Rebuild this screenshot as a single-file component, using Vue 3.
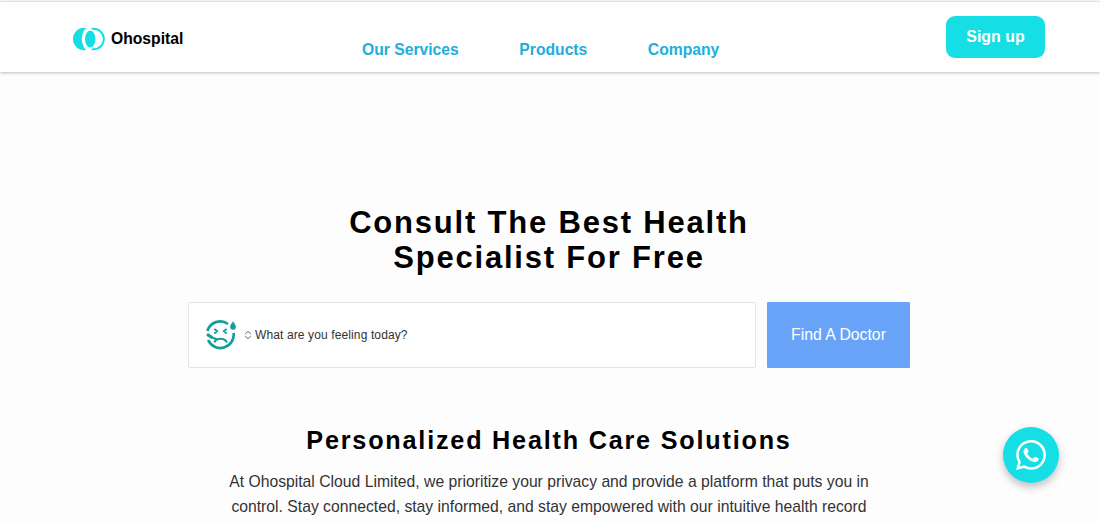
<template>
    <div class="page">
        <header class="navbar">
            <a class="brand" href="#">
                <svg class="brand-logo" viewBox="0 0 32 24">
                    <circle cx="11.3" cy="12" r="11.3" fill="#15dfe4" />
                    <circle cx="20.6" cy="12" r="11.8" fill="#fefefe" />
                    <circle cx="20.6" cy="12" r="10.2" fill="none" stroke="#15dfe4" stroke-width="1.9" />
                    <ellipse cx="15.6" cy="12" rx="6.6" ry="11.6" fill="#fefefe" />
                    <ellipse cx="17.2" cy="12" rx="5.2" ry="8.6" fill="#15dfe4" />
                </svg>
                <span>Ohospital</span>
            </a>
            <nav class="links">
                <a v-for="link in links" :key="link" href="#">{{ link }}</a>
            </nav>
            <button class="btn-signup">Sign up</button>
        </header>

        <main class="hero">
            <h1>Consult The Best Health<br />Specialist For Free</h1>

            <form class="search" @submit.prevent>
                <label class="search-box">
                    <svg class="face" viewBox="0 0 32 32" fill="none" stroke="#179d98" stroke-width="2.7">
                        <path d="M2.4 12A13.3 13.3 0 0 1 23 5M28.6 14A13.3 13.3 0 0 1 3.2 21" />
                        <path d="M9.4 10l2.6 2.1-2.6 2.3M21.6 10l-2.6 2.1 2.6 2.3" stroke-width="2" />
                        <path d="M2 15.4l5.4 3.2" stroke-width="3" />
                        <path d="M6.6 18.4l5 1.6M9.2 23.4c2.8-4.8 10-4.8 12.8 0" stroke-width="2.1" />
                        <path d="M28 2.2c1.1 2 2.9 3.7 2.9 5.6a2.9 2.9 0 0 1-5.8 0c0-1.9 1.8-3.6 2.9-5.6z" fill="#179d98" stroke="none" />
                    </svg>
                    <svg class="sort" viewBox="0 0 8 10" fill="none" stroke="#555" stroke-width="0.9">
                        <path d="M1.2 4L4 1.3 6.8 4M1.2 6L4 8.7 6.8 6" />
                    </svg>
                    <span>What are you feeling today?</span>
                </label>
                <button class="btn-find">Find A Doctor</button>
            </form>
        </main>

        <section class="solutions">
            <h2>Personalized Health Care Solutions</h2>
            <p>
                At Ohospital Cloud Limited, we prioritize your privacy and provide a platform that puts you in<br />
                control. Stay connected, stay informed, and stay empowered with our intuitive health record
            </p>
        </section>

        <a class="chat" href="#" aria-label="WhatsApp">
            <svg viewBox="0 0 24 24" fill="#fff">
                <path d="M17.472 14.382c-.297-.149-1.758-.867-2.03-.967-.273-.099-.471-.148-.67.15-.197.297-.767.966-.94 1.164-.173.199-.347.223-.644.075-.297-.15-1.255-.463-2.39-1.475-.883-.788-1.48-1.761-1.653-2.059-.173-.297-.018-.458.13-.606.134-.133.298-.347.446-.52.149-.174.198-.298.298-.497.099-.198.05-.371-.025-.52-.075-.149-.669-1.612-.916-2.207-.242-.579-.487-.5-.669-.51-.173-.008-.371-.01-.57-.01-.198 0-.52.074-.792.372-.272.297-1.04 1.016-1.04 2.479 0 1.462 1.065 2.875 1.213 3.074.149.198 2.096 3.2 5.077 4.487.709.306 1.262.489 1.694.625.712.227 1.36.195 1.871.118.571-.085 1.758-.719 2.006-1.413.248-.694.248-1.289.173-1.413-.074-.124-.272-.198-.57-.347m-5.421 7.403h-.004a9.87 9.87 0 0 1-5.031-1.378l-.361-.214-3.741.982.998-3.648-.235-.374a9.86 9.86 0 0 1-1.51-5.26c.001-5.45 4.436-9.884 9.888-9.884 2.64 0 5.122 1.03 6.988 2.898a9.825 9.825 0 0 1 2.893 6.994c-.003 5.45-4.437 9.884-9.885 9.884m8.413-18.297A11.815 11.815 0 0 0 12.05 0C5.495 0 .16 5.335.157 11.892c0 2.096.547 4.142 1.588 5.945L.057 24l6.305-1.654a11.882 11.882 0 0 0 5.683 1.448h.005c6.554 0 11.89-5.335 11.893-11.893a11.821 11.821 0 0 0-3.48-8.413z" />
            </svg>
        </a>
    </div>
</template>

<script setup>
const links = ["Our Services", "Products", "Company"];
</script>

<style>
body {
    margin: 0;
    background: #fefdfe;
}
</style>

<style scoped>
.page {
    height: 523px;
    overflow: hidden;
    font-family: "Liberation Sans", Arial, sans-serif;
    color: #000;
}

a {
    color: inherit;
    text-decoration: none;
}

button {
    border: none;
    padding: 0;
    font-family: inherit;
    color: #fff;
    cursor: pointer;
}

.navbar {
    display: flex;
    align-items: flex-start;
    box-sizing: border-box;
    height: 71px;
    margin-top: 1px;
    padding: 0 55px 0 73px;
    border-top: 1px solid #e2e2e2;
    background: #fefefe;
    box-shadow: 0 1px 3px rgba(0, 0, 0, 0.25);
}

.brand {
    display: flex;
    align-items: center;
    width: 289px;
    margin-top: 25px;
    gap: 6px;
    font-size: 15.7px;
    font-weight: 700;
}

.brand-logo {
    width: 32px;
    height: 24px;
}

.links {
    display: flex;
    flex: 1;
    gap: 60.5px;
    margin-top: 39px;
    font-size: 15.7px;
    line-height: 18px;
    font-weight: 700;
    color: #22aedb;
}

.btn-signup {
    width: 99px;
    height: 42px;
    margin-top: 14px;
    border-radius: 9px;
    background: #15dfe4;
    font-size: 15.9px;
    font-weight: 700;
}

.hero {
    padding-top: 133px;
}

h1 {
    width: 1098px;
    margin: 0;
    font-size: 31px;
    line-height: 35px;
    letter-spacing: 1.8px;
    text-align: center;
}

.search {
    display: flex;
    gap: 11px;
    width: 722px;
    height: 66px;
    margin: 27px 0 0 188px;
}

.search-box {
    display: flex;
    align-items: center;
    box-sizing: border-box;
    width: 568px;
    padding-left: 16px;
    border: 1.5px solid #e4e3e7;
    border-radius: 2px;
    background: #fefefe;
    font-size: 12px;
    letter-spacing: 0.12px;
    color: #333;
}

.face {
    width: 32px;
    height: 32px;
    margin-right: 7px;
}

.sort {
    width: 8px;
    height: 10px;
    margin-right: 3px;
}

.btn-find {
    width: 143px;
    border-radius: 1px;
    background: #69a3f8;
    font-size: 15.8px;
}

.solutions {
    width: 1098px;
    margin-top: 57px;
    text-align: center;
}

h2 {
    margin: 0;
    font-size: 25.2px;
    line-height: 30px;
    letter-spacing: 1.8px;
}

p {
    margin: 15px 0 0;
    font-size: 15.73px;
    line-height: 24.5px;
    white-space: nowrap;
    color: #333;
}

.chat {
    position: fixed;
    right: 41px;
    bottom: 40px;
    display: flex;
    align-items: center;
    justify-content: center;
    width: 56px;
    height: 56px;
    border-radius: 50%;
    background: #15dfe4;
    box-shadow: 0 4px 8px rgba(0, 0, 0, 0.25);
}

.chat svg {
    width: 30px;
    height: 30px;
}
</style>
